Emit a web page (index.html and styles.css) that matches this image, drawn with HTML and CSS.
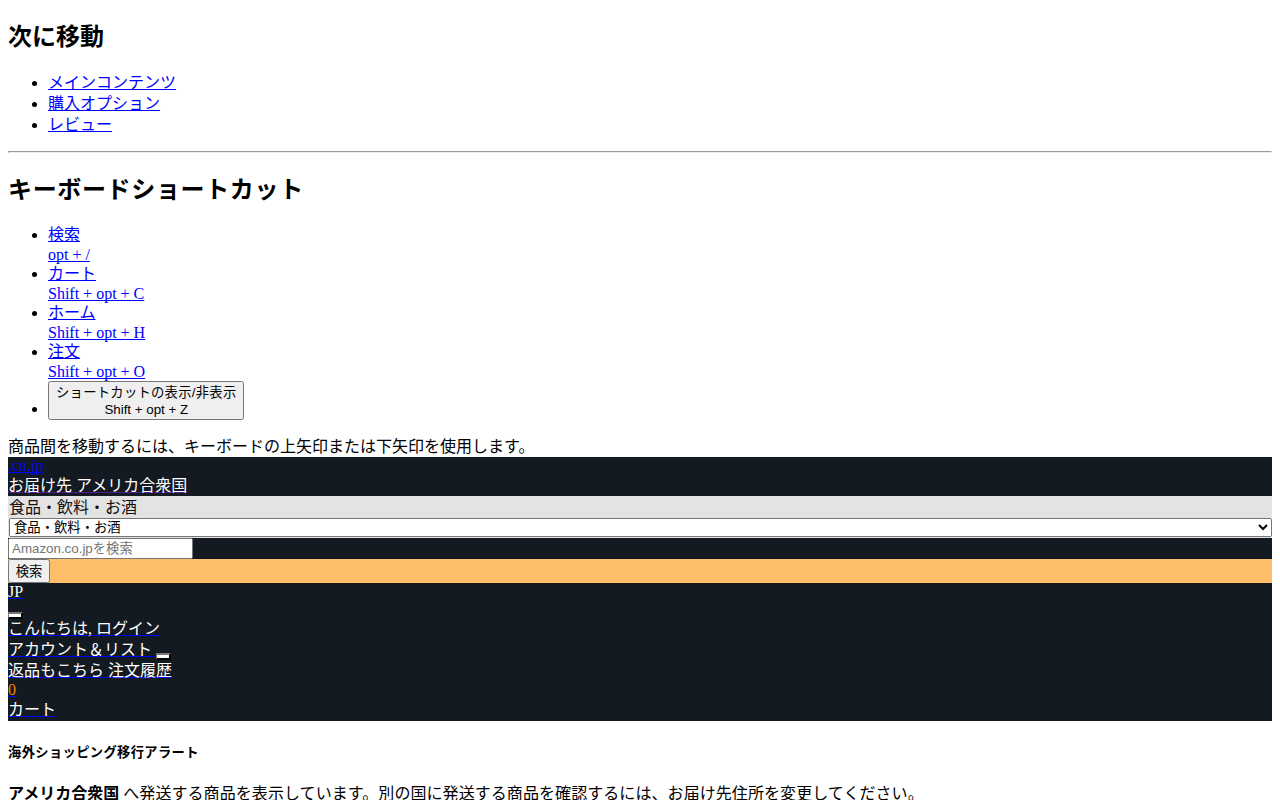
FILE: index.html
```html
<!DOCTYPE html>
<html lang="ja">
<head>
  <meta charset="UTF-8">
  <title>Amazon.co.jp</title>
  <link rel="stylesheet" href="styles.css">
</head>
<body>
  <h2 class="skip-title">次に移動</h2>
  <ul>
    <li><a href="#">メインコンテンツ</a></li>
    <li><a href="#">購入オプション</a></li>
    <li><a href="#">レビュー</a></li>
  </ul>
  <hr>
  <h2 class="shortcut-title">キーボードショートカット</h2>
  <ul>
    <li><a href="#">検索<span class="key">opt + /</span></a></li>
    <li><a href="#">カート<span class="key">Shift + opt + C</span></a></li>
    <li><a href="#">ホーム<span class="key">Shift + opt + H</span></a></li>
    <li><a href="#">注文<span class="key">Shift + opt + O</span></a></li>
    <li class="btn-item"><button class="shortcut-btn"><span class="shortcut-label">ショートカットの表示/非表示</span><br>Shift + opt + Z</button></li>
  </ul>
  <div class="hint">商品間を移動するには、キーボードの上矢印または下矢印を使用します。</div>

  <header class="nav">
    <div class="latin-row"><a href="#">.co.jp</a></div>
    <div><a href="#" class="visited"><span class="nav-text">お届け先 アメリカ合衆国</span></a></div>
    <div class="search-cat">
      <div class="cat-label">食品・飲料・お酒</div>
      <select class="cat-select"><option>食品・飲料・お酒</option></select>
    </div>
    <div class="search-input"><input type="text" placeholder="Amazon.co.jpを検索"></div>
    <div class="search-submit"><input type="submit" value="検索"></div>
    <div class="latin-row"><a href="#"><span class="nav-text">JP</span></a></div>
    <div class="caret-row"><button class="caret"></button></div>
    <div><a href="#"><span class="nav-text">こんにちは, ログイン</span></a></div>
    <div><a href="#"><span class="nav-text">アカウント＆リスト </span></a><button class="caret"></button></div>
    <div><a href="#"><span class="nav-text">返品もこちら 注文履歴</span></a></div>
    <div class="latin-row"><a href="#"><span class="cart-count">0</span></a></div>
    <div class="cart-row"><a href="#"><span class="nav-text">カート</span></a></div>
  </header>

  <h5>海外ショッピング移行アラート</h5>
  <p class="ship-note"><strong>アメリカ合衆国</strong> へ発送する商品を表示しています。別の国に発送する商品を確認するには、お届け先住所を変更してください。</p>
</body>
</html>
```

FILE: styles.css
```css
body {
  font-family: "Liberation Serif", "Noto Sans CJK JP", serif;
  line-height: 21px;
  margin-top: 0;
}

a {
  text-decoration-skip-ink: none;
  color: #00f;
}

h2 {
  line-height: 31px;
}

.skip-title {
  margin-top: 22px;
  margin-bottom: 19px;
}

.shortcut-title {
  letter-spacing: 0.65px;
  margin-top: 22px;
  margin-bottom: 18px;
}

.key {
  display: block;
  padding-top: 1px;
  margin-bottom: -1px;
  line-height: 18px;
}

.btn-item {
  padding-top: 1px;
}

.shortcut-btn {
  font-family: "Liberation Sans", "Noto Sans CJK JP", sans-serif;
  font-size: 13.33px;
  line-height: 17px;
  padding: 1px 6px 0;
}

.shortcut-label {
  letter-spacing: 0.25px;
}

.nav {
  background: #131a22;
  color: #fff;
}

.latin-row {
  line-height: 18px;
}

.cart-row {
  line-height: 22px;
}

.nav-text {
  color: #fff;
}

a.visited {
  color: #551a8b;
}

.search-cat {
  background: #e3e3e3;
  color: #111;
  padding: 0 0 1px 1px;
}

.cat-label {
  padding-top: 1px;
  line-height: 21px;
}

.cat-select {
  display: block;
  width: 100%;
  height: 19px;
  font-family: "Liberation Sans", "Noto Sans CJK JP", sans-serif;
}

.search-input {
  display: flex;
}

.search-input input {
  font-family: "Liberation Sans", "Noto Sans CJK JP", sans-serif;
  height: 15px;
}

.search-submit {
  background: #febd69;
  display: flex;
}

.search-submit input {
  font-family: "Liberation Sans", "Noto Sans CJK JP", sans-serif;
  height: 24px;
  width: 42px;
  padding: 0 0 2px;
}

.caret-row {
  height: 17px;
  line-height: 17px;
}

.caret-row .caret {
  vertical-align: -2px;
}

.caret {
  box-sizing: border-box;
  vertical-align: -3px;
  width: 15px;
  height: 7px;
  padding: 0;
  border-style: solid;
  border-width: 2px 2px 2px 1px;
  border-color: #777 #000 #000 #777;
  border-radius: 0;
  background: #fff;
}

.cart-count {
  color: #f08804;
}

h5 {
  font-size: 13.28px;
  line-height: 20px;
  letter-spacing: 0.36px;
  margin-bottom: 20px;
}

.ship-note {
  letter-spacing: 0.07px;
}

.ship-note strong {
  letter-spacing: 0;
}
```
